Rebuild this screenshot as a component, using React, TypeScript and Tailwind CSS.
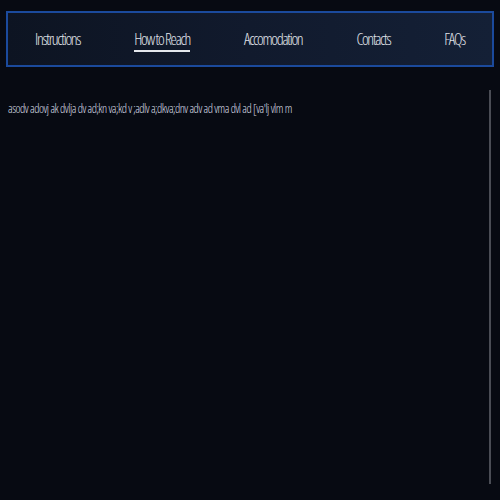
const items = ["Instructions", "How to Reach", "Accomodation", "Contacts", "FAQs"];

export default function App() {
  return (
    <div className="h-[500px] w-full bg-[#070a12] overflow-hidden flex flex-col font-['Open_Sans',sans-serif]">
      <nav className="mx-[6px] mt-[11px] h-[56px] border-2 border-[#1b4a9c] bg-gradient-to-r from-[#0d1422] via-[#111a2d] to-[#142036] flex items-center justify-around">
        {items.map((t) => (
          <div key={t} className="relative flex flex-col items-center">
            <span className="text-[16px] leading-[20px] font-light tracking-[-0.08em] text-[#e0e3ea] [font-stretch:75%]">
              {t}
            </span>
            {t === "How to Reach" && (
              <span className="absolute left-0 right-0 top-[21px] h-[2px] bg-[#e4e7ec]" />
            )}
          </div>
        ))}
      </nav>
      <div className="flex flex-1 mt-[23px] mb-[16px]">
        <div className="flex-1 pl-[8px] pt-[11px]">
          <p className="text-[12px] leading-[16px] font-light tracking-[-0.04em] text-[#d6dae2] [font-stretch:75%]">
            asodv adovj ak dvlja dv ad;kn va;kd v ;adlv a;dkva;dnv adv ad vma dvl ad [va'lj vlm m
          </p>
        </div>
        <div className="w-[2px] mr-[9px] bg-[#4a4d55]" />
      </div>
    </div>
  );
}
